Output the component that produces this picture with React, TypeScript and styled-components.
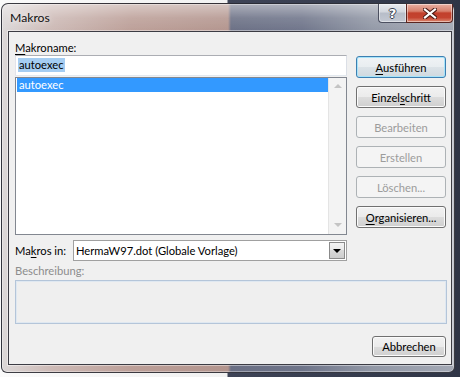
import React from "react";
import styled, { createGlobalStyle, css } from "styled-components";

const GlobalStyle = createGlobalStyle`
  html, body { margin: 0; padding: 0; }
  body {
    width: 460px;
    height: 377px;
    overflow: hidden;
    background: linear-gradient(to right, #fafafa 0px, #f2f2f2 227px, #3e4457 228px, #2f3546 460px);
    font-family: Lato, "Noto Sans", sans-serif;
    font-size: 11.2px;
    color: #000;
  }
`;

const Page = styled.div`
  padding: 3px 0 0 1px;
`;

const Window = styled.div`
  width: 454px;
  height: 370px;
  box-sizing: border-box;
  border: 1px solid rgba(30, 32, 40, 0.85);
  border-radius: 7px 7px 6px 6px;
  background:
    linear-gradient(to bottom, rgba(255,255,255,0.45) 0px, rgba(255,255,255,0.12) 14px, rgba(255,255,255,0) 28px),
    linear-gradient(to right, #dcd8d8 0px, #cdbab6 50px, #bc9f98 130px, #b3958e 226px, #6a6f84 229px, #6f758a 300px, #9298a6 370px, #a4a9b5 455px);
  box-shadow: inset 0 0 0 1px rgba(255,255,255,0.35);
  display: flex;
  flex-direction: column;
`;

const TitleBar = styled.div`
  height: 27px;
  display: flex;
  align-items: flex-start;
  padding-left: 8px;
`;

const Title = styled.div`
  margin-top: 6px;
  line-height: 15px;
  font-size: 12.2px;
  color: #111;
  text-shadow: 0 0 6px rgba(255,255,255,0.9);
`;

const CaptionButtons = styled.div`
  margin-left: auto;
  margin-right: 1px;
  display: flex;
`;

const CaptionButton = styled.div<{ $kind: "help" | "close" }>`
  height: 19px;
  box-sizing: border-box;
  display: flex;
  align-items: center;
  justify-content: center;
  border: 1px solid #4c5060;
  border-top: none;
  box-shadow: inset 0 0 0 1px rgba(255,255,255,0.45);
  ${(p) =>
    p.$kind === "help"
      ? css`
          width: 28px;
          border-right: none;
          border-radius: 0 0 0 4px;
          background: linear-gradient(to bottom, #e9ebef 0%, #d2d6dd 45%, #b7bdc8 50%, #c3c8d2 100%);
        `
      : css`
          width: 47px;
          border-color: #5a2520;
          border-radius: 0 0 4px 0;
          background: linear-gradient(to bottom, #eab1a3 0%, #d8806c 40%, #c2402c 50%, #c4432f 75%, #dc8a72 100%);
        `}
`;

const Client = styled.div`
  margin: 0 2px 0 6px;
  height: 334px;
  box-sizing: border-box;
  background: #f0f0f0;
  border: 1px solid #3c3c44;
  box-shadow: 0 0 0 1px rgba(255,255,255,0.45);
  padding: 8px 5px 0 6px;
  display: flex;
  flex-direction: column;
`;

const TopSection = styled.div`
  display: flex;
  gap: 9px;
`;

const LeftColumn = styled.div`
  width: 332px;
  display: flex;
  flex-direction: column;
`;

const RightColumn = styled.div`
  width: 90px;
  padding-top: 16px;
  display: flex;
  flex-direction: column;
  gap: 8px;
`;

const Label = styled.div<{ $disabled?: boolean }>`
  height: 15px;
  line-height: 15px;
  color: ${(p) => (p.$disabled ? "#8d8d8d" : "#000")};
  white-space: nowrap;
`;

const TextBox = styled.div`
  height: 21px;
  box-sizing: border-box;
  background: #fff;
  border: 1px solid;
  border-color: #abadb3 #dbdfe6 #e3e9ef #e2e3ea;
  padding: 2px 0 0 2px;
`;

const Selection = styled.span`
  display: inline-block;
  height: 14px;
  line-height: 14px;
  padding: 0 1px;
  background: #a5cdf2;
  color: #000;
`;

const ListBox = styled.div`
  margin-top: 1px;
  height: 158px;
  box-sizing: border-box;
  background: #fff;
  border: 1px solid #828790;
  display: flex;
`;

const ListItems = styled.div`
  flex: 1;
  padding: 0 0 0 1px;
`;

const ListItem = styled.div<{ $selected?: boolean }>`
  height: 14px;
  line-height: 14px;
  padding-left: 2px;
  background: ${(p) => (p.$selected ? "#3399ff" : "transparent")};
  color: ${(p) => (p.$selected ? "#fff" : "#000")};
`;

const ScrollBar = styled.div`
  width: 17px;
  background: #f3f3f3;
  border-left: 1px solid #e4e4e4;
  display: flex;
  flex-direction: column;
  justify-content: space-between;
  align-items: center;
  padding: 6px 0 7px;
`;

const Arrow = styled.div<{ $dir: "up" | "down"; $color: string }>`
  width: 0;
  height: 0;
  border-left: 4px solid transparent;
  border-right: 4px solid transparent;
  ${(p) =>
    p.$dir === "up"
      ? css`border-bottom: 4px solid ${p.$color};`
      : css`border-top: 4px solid ${p.$color};`}
`;

const MacrosInRow = styled.div`
  margin-top: 5px;
  display: flex;
  align-items: center;
  height: 21px;
`;

const InlineLabel = styled.div`
  width: 58px;
  line-height: 15px;
  white-space: nowrap;
`;

const ComboBox = styled.div`
  width: 274px;
  height: 21px;
  box-sizing: border-box;
  background: #fff;
  border: 1px solid #a0a0a0;
  display: flex;
  align-items: center;
  padding: 1px 1px 1px 2px;
`;

const ComboText = styled.div`
  flex: 1;
  line-height: 15px;
  white-space: nowrap;
`;

const ComboButton = styled.div`
  width: 16px;
  height: 17px;
  box-sizing: border-box;
  border: 1px solid #8a8a8a;
  background: linear-gradient(to bottom, #f4f4f4 0%, #e8e8e8 50%, #d9d9d9 50%, #cdcdcd 100%);
  display: flex;
  align-items: center;
  justify-content: center;
`;

const DescLabel = styled(Label)`
  margin-top: 2px;
`;

const DescriptionBox = styled.div`
  margin-top: 2px;
  width: 432px;
  height: 44px;
  box-sizing: border-box;
  background: #efefef;
  border: 1px solid #b4c5d9;
  box-shadow: inset 0 0 0 1px #dfe8f1;
`;

const Footer = styled.div`
  margin-top: 12px;
  display: flex;
  justify-content: flex-end;
`;

const Button = styled.div<{ $variant?: "default" | "normal" | "disabled"; $width?: number; $height?: number }>`
  width: ${(p) => p.$width ?? 90}px;
  height: ${(p) => p.$height ?? 22}px;
  box-sizing: border-box;
  border-radius: 3px;
  display: flex;
  align-items: center;
  justify-content: center;
  white-space: nowrap;
  line-height: 15px;
  ${(p) => {
    switch (p.$variant) {
      case "disabled":
        return css`
          border: 1px solid #adb2b5;
          background: #f4f4f4;
          color: #9c9c9c;
        `;
      case "default":
        return css`
          border: 1px solid #3c7fb1;
          background: linear-gradient(to bottom, #f0f3f5 0%, #e8edf0 50%, #dce3e8 50%, #d0d9df 100%);
          box-shadow: inset 0 0 0 1px #a8e4fa;
          color: #000;
        `;
      default:
        return css`
          border: 1px solid #707070;
          background: linear-gradient(to bottom, #f2f2f2 0%, #ebebeb 50%, #dddddd 50%, #cfcfcf 100%);
          box-shadow: inset 0 0 0 1px #fbfbfb;
          color: #000;
        `;
    }
  }}
`;

const U = styled.span`
  text-decoration: underline;
  text-underline-offset: 2px;
`;

const HelpGlyph = styled.span`
  font-family: "DejaVu Sans", sans-serif;
  font-weight: bold;
  font-size: 13px;
  line-height: 13px;
  color: #fff;
  text-shadow: -1px 0 #3b4150, 1px 0 #3b4150, 0 -1px #3b4150, 0 1px #3b4150;
`;

const CloseIcon = () => (
  <svg width="14" height="11" viewBox="0 0 14 11">
    <path d="M2 1.5 L12 9.5 M12 1.5 L2 9.5" stroke="#4a1a14" strokeWidth="4.2" strokeLinecap="square" fill="none" />
    <path d="M2 1.5 L12 9.5 M12 1.5 L2 9.5" stroke="#fff" strokeWidth="2.2" strokeLinecap="square" fill="none" />
  </svg>
);

export default function App() {
  return (
    <>
      <GlobalStyle />
      <Page>
        <Window>
          <TitleBar>
            <Title>Makros</Title>
            <CaptionButtons>
              <CaptionButton $kind="help">
                <HelpGlyph>?</HelpGlyph>
              </CaptionButton>
              <CaptionButton $kind="close">
                <CloseIcon />
              </CaptionButton>
            </CaptionButtons>
          </TitleBar>
          <Client>
            <TopSection>
              <LeftColumn>
                <Label>
                  <U>M</U>akroname:
                </Label>
                <TextBox>
                  <Selection>autoexec</Selection>
                </TextBox>
                <ListBox>
                  <ListItems>
                    <ListItem $selected>autoexec</ListItem>
                  </ListItems>
                  <ScrollBar>
                    <Arrow $dir="up" $color="#c4c4c4" />
                    <Arrow $dir="down" $color="#c4c4c4" />
                  </ScrollBar>
                </ListBox>
              </LeftColumn>
              <RightColumn>
                <Button $variant="default">
                  <U>A</U>usführen
                </Button>
                <Button>
                  Einzel<U>s</U>chritt
                </Button>
                <Button $variant="disabled">Bearbeiten</Button>
                <Button $variant="disabled">Erstellen</Button>
                <Button $variant="disabled">Löschen...</Button>
                <Button>
                  <U>O</U>rganisieren...
                </Button>
              </RightColumn>
            </TopSection>
            <MacrosInRow>
              <InlineLabel>
                Ma<U>k</U>ros in:
              </InlineLabel>
              <ComboBox>
                <ComboText>HermaW97.dot (Globale Vorlage)</ComboText>
                <ComboButton>
                  <Arrow $dir="down" $color="#000" />
                </ComboButton>
              </ComboBox>
            </MacrosInRow>
            <DescLabel $disabled>Beschreibung:</DescLabel>
            <DescriptionBox />
            <Footer>
              <Button $width={74} $height={21}>
                Abbrechen
              </Button>
            </Footer>
          </Client>
        </Window>
      </Page>
    </>
  );
}
